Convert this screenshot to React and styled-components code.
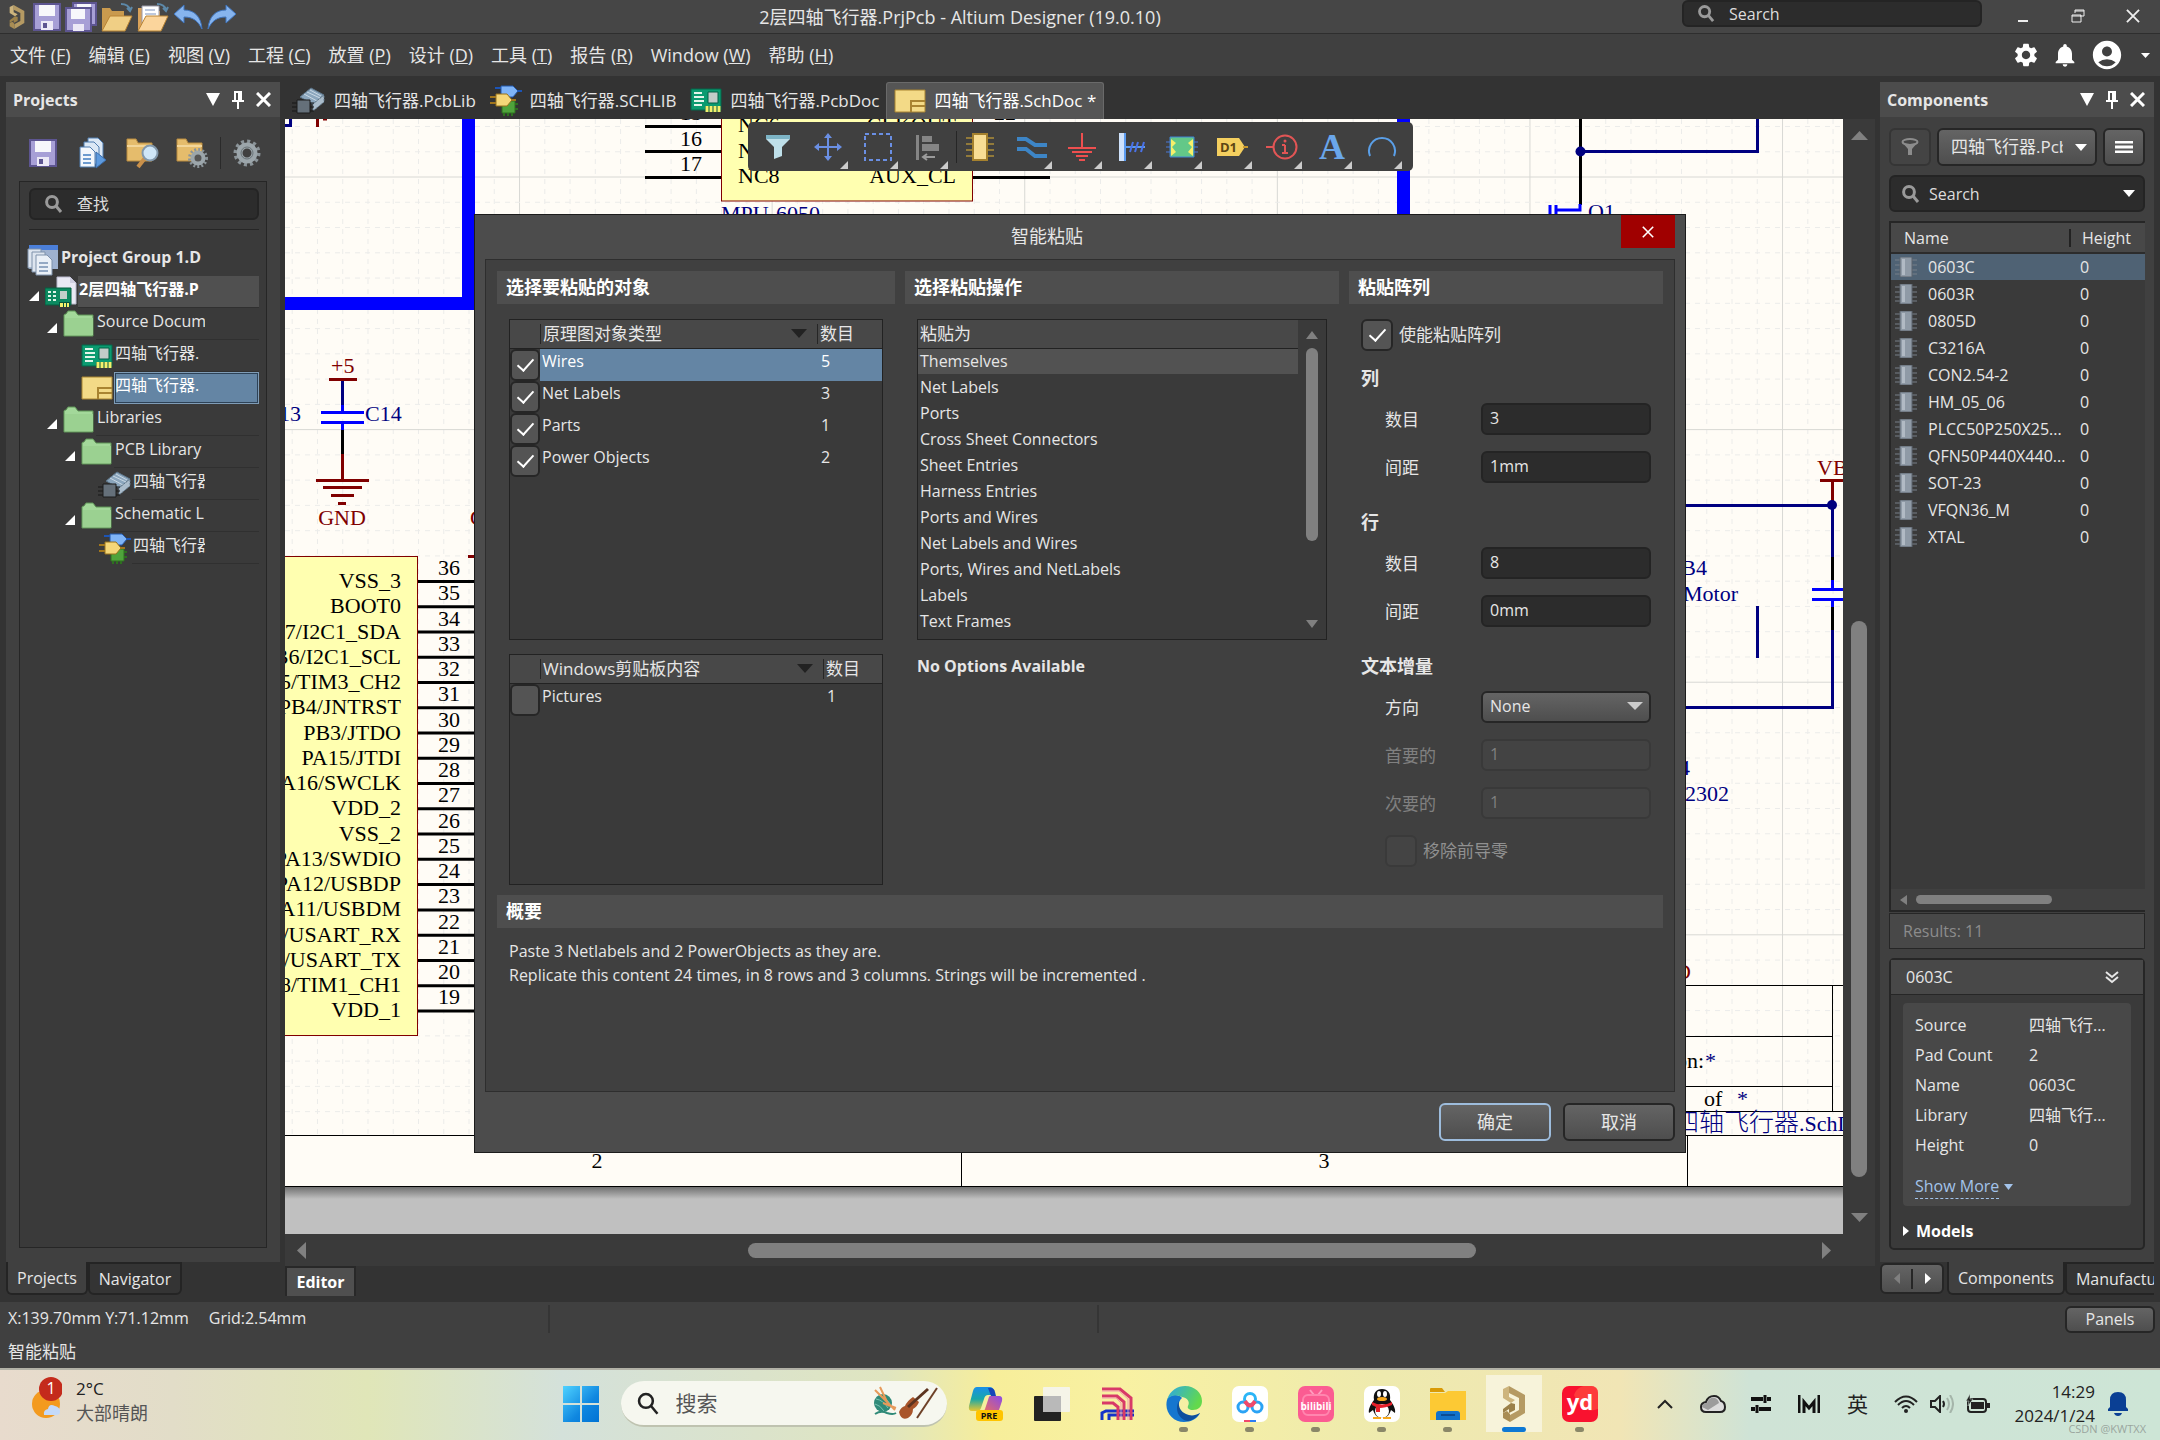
import React from 'react';
import styled, { createGlobalStyle, css } from 'styled-components';
import { MdSettings, MdNotifications, MdAccountCircle } from 'react-icons/md';

const projectTree = [
  { level: 0, icon: 'group', text: 'Project Group 1.D', bold: true, plain: true },
  { level: 1, icon: 'project', text: '2层四轴飞行器.P', bold: true, open: true, active: true },
  { level: 2, icon: 'folder', text: 'Source Docum', open: true },
  { level: 3, icon: 'pcb', text: '四轴飞行器.' },
  { level: 3, icon: 'sch', text: '四轴飞行器.', selected: true },
  { level: 2, icon: 'folder', text: 'Libraries', open: true },
  { level: 3, icon: 'folder', text: 'PCB Library', open: true },
  { level: 4, icon: 'pcblib', text: '四轴飞行器' },
  { level: 3, icon: 'folder', text: 'Schematic L', open: true },
  { level: 4, icon: 'schlib', text: '四轴飞行器' },
];

const menus = [
  ['文件', 'F'],
  ['编辑', 'E'],
  ['视图', 'V'],
  ['工程', 'C'],
  ['放置', 'P'],
  ['设计', 'D'],
  ['工具', 'T'],
  ['报告', 'R'],
  ['Window', 'W'],
  ['帮助', 'H'],
];

const docTabs = [
  { icon: 'pcblib', text: '四轴飞行器.PcbLib' },
  { icon: 'schlib', text: '四轴飞行器.SCHLIB' },
  { icon: 'pcb', text: '四轴飞行器.PcbDoc' },
  { icon: 'sch', text: '四轴飞行器.SchDoc *', active: true },
];

const pasteTypes = [
  'Themselves',
  'Net Labels',
  'Ports',
  'Cross Sheet Connectors',
  'Sheet Entries',
  'Harness Entries',
  'Ports and Wires',
  'Net Labels and Wires',
  'Ports, Wires and NetLabels',
  'Labels',
  'Text Frames',
];

const parts = [
  '0603C',
  '0603R',
  '0805D',
  'C3216A',
  'CON2.54-2',
  'HM_05_06',
  'PLCC50P250X25...',
  'QFN50P440X440...',
  'SOT-23',
  'VFQN36_M',
  'XTAL',
];

const details = [
  ['Source', '四轴飞行...'],
  ['Pad Count', '2'],
  ['Name', '0603C'],
  ['Library', '四轴飞行...'],
  ['Height', '0'],
];

const mcuPins = [
  'VSS_3',
  'BOOT0',
  'PB7/I2C1_SDA',
  'PB6/I2C1_SCL',
  'PB5/TIM3_CH2',
  'PB4/JNTRST',
  'PB3/JTDO',
  'PA15/JTDI',
  'PA16/SWCLK',
  'VDD_2',
  'VSS_2',
  'PA13/SWDIO',
  'PA12/USBDP',
  'PA11/USBDM',
  'PA10/USART_RX',
  'PA9/USART_TX',
  'PA8/TIM1_CH1',
  'VDD_1',
];

/* ---------- icons ---------- */

function SaveIcon() {
  return (
    <svg width="28" height="28" viewBox="0 0 28 28">
      <path d="M1 1h26v26H1z" fill="#a79fd6" stroke="#5d5591" strokeWidth="2" />
      <path d="M6 2h16v11H6z" fill="#f7f7fb" />
      <path d="M8 18h12v9H8z" fill="#ece9f6" />
      <path d="M10 20h4v5h-4z" fill="#5d5591" />
    </svg>
  );
}

function SaveAllIcon() {
  return (
    <svg width="32" height="30" viewBox="0 0 32 30">
      <path d="M8 1h23v22H8z" fill="#a79fd6" stroke="#5d5591" strokeWidth="2" />
      <path d="M12 2h14v6H12z" fill="#f7f7fb" />
      <path d="M1 6h25v23H1z" fill="#a79fd6" stroke="#5d5591" strokeWidth="2" />
      <path d="M6 7h14v10H6z" fill="#f7f7fb" />
      <path d="M8 22h11v7H8z" fill="#ece9f6" />
    </svg>
  );
}

function OpenFolderIcon({ doc }) {
  return (
    <svg width="32" height="30" viewBox="0 0 32 30">
      <path d="M1 28V6h8l2 3h12v6" fill={doc ? '#d9a25a' : '#c99a4e'} />
      {doc && <path d="M5 4h17v20H5z" fill="#fff" stroke="#9a9aa8" />}
      {doc && <path d="M8 8h10M8 12h11M8 16h11" stroke="#7c93bd" />}
      <path d="M1 29 9 14h22l-7 15z" fill={doc ? '#fbd59c' : '#f0cf85'} stroke="#b98434" />
      <path d="M20 2c5 0 8 2 9 6m-3-2 3 3 2-4" fill="none" stroke="#5c88a8" strokeWidth="2" />
    </svg>
  );
}

function UndoIcon({ flip }) {
  return (
    <svg width="30" height="26" viewBox="0 0 30 26">
      <path
        d="M1 10 11 1v5c10 0 17 6 18 19-4-8-9-12-18-12v6z"
        fill="#86b4ee"
        stroke="#3f74bd"
        transform={flip ? 'translate(30 0) scale(-1 1)' : undefined}
      />
    </svg>
  );
}

function LogoIcon({ size = 24 }) {
  return (
    <svg width={size} height={size} viewBox="-7 0 36 36">
      <path d="M6 0 22 9v18L7 36v-7l9-5V12L6 7z" fill="#b59a63" />
      <path d="M6 0 0 3v9l8 5 4-3-6-3V7z" fill="#cdb47d" />
      <path d="m0 23 8-6 4 1v6l-6 3v-4l-6 4z" fill="#9b8049" />
      <path d="M0 27v5l7 4v-8l-3-3z" fill="#a98d54" />
    </svg>
  );
}

function SearchGlyph({ color = '#9a9a9a', size = 18, weight = 3 }) {
  return (
    <svg width={size} height={size} viewBox="0 0 18 18">
      <circle cx="7" cy="7" r="5.4" fill="none" stroke={color} strokeWidth={weight} />
      <path d="m11 11 5 6" stroke={color} strokeWidth={weight} />
    </svg>
  );
}

function Triangle({ dir = 'down', w = 16, h = 12, color = '#fff' }) {
  const shapes = {
    down: 'M0 0h10L5 10z',
    up: 'M5 0l5 10H0z',
    left: 'M10 0v10L0 5z',
    right: 'M0 0l10 5-10 5z',
    corner: 'M10 0v10H0z',
  };
  return (
    <svg width={w} height={h} viewBox="0 0 10 10" preserveAspectRatio="none">
      <path d={shapes[dir]} fill={color} />
    </svg>
  );
}

function PinIcon() {
  return (
    <svg width="12" height="18" viewBox="0 0 12 18">
      <path d="M2 0h8v9h2v2H7v7H5v-7H0V9h2zm2 2v7h2V2z" fill="#fff" fillRule="evenodd" />
    </svg>
  );
}

function CrossIcon({ size = 15, weight = 3, color = '#fff' }) {
  return (
    <svg width={size} height={size} viewBox="0 0 15 15">
      <path d="m1 1 13 13M14 1 1 14" stroke={color} strokeWidth={weight} />
    </svg>
  );
}

function FileIcon({ type }) {
  switch (type) {
    case 'group':
      return (
        <svg width="32" height="32" viewBox="0 0 32 32">
          <path d="M2 1h29v24H2z" fill="#9fb2cf" />
          <path d="M2 1h29v5H2z" fill="#4b7fd9" />
          <path d="M1 5h13v19H1z" fill="#dde5ef" stroke="#7f92ab" />
          <path d="M5 8h13v20H5z" fill="#dde5ef" stroke="#7f92ab" />
          <path d="M9 11h11l5 5v15H9z" fill="#eaf0f7" stroke="#7f92ab" />
          <path d="M12 19h9M12 23h9M12 27h9" stroke="#94a9c4" strokeWidth="2" />
        </svg>
      );
    case 'project':
      return (
        <svg width="32" height="32" viewBox="0 0 32 32">
          <path d="M12 1h13l6 6v21H12z" fill="#e9e9f4" stroke="#b9b9cd" />
          <path d="M25 1v6h6" fill="#cfcfe0" />
          <path d="M0 12h26v17H0z" fill="#0c8a60" stroke="#045c3e" />
          <path d="M3 16h3M8 16h3M3 20h3M8 20h3M3 24h3M8 24h3" stroke="#dff5e8" strokeWidth="2" />
          <path d="M15 15h7v8h-7z" fill="#c3cfca" />
          <path d="M14 26h11v5H14z" fill="#07563f" />
          <path d="M15 29h3M19 29h2M22 29h2" stroke="#f4f06d" strokeWidth="4" />
        </svg>
      );
    case 'folder':
      return (
        <svg width="32" height="28" viewBox="0 0 32 28">
          <path d="M1 26V5q0-1 2-1l2-3h7l3 4h15v21z" fill="#a3d89a" stroke="#5e9457" />
          <path d="M2 8h28v17H2z" fill="#9bd191" />
        </svg>
      );
    case 'pcb':
      return (
        <svg width="32" height="25" viewBox="0 0 32 25">
          <path d="M1 1h30v21H1z" fill="#0b9b70" stroke="#05664a" />
          <path d="M4 5h8M4 9h10M4 13h10M4 17h8" stroke="#e2f5ea" strokeWidth="2" />
          <path d="M18 4h10v11H18z" fill="#c2ccc8" stroke="#056146" />
          <path d="M15 18h16v6H15z" fill="#07563f" />
          <path d="M17 18v6M21 18v6M25 18v6M29 18v6" stroke="#f4f06d" strokeWidth="3" />
        </svg>
      );
    case 'sch':
      return (
        <svg width="32" height="24" viewBox="0 0 32 24">
          <path d="M1 1h30v22H1z" fill="#f3da87" stroke="#a98431" />
          <path d="M17 23V12h14M17 17h14" fill="none" stroke="#a98431" strokeWidth="2" />
        </svg>
      );
    case 'pcblib':
      return (
        <svg width="34" height="27" viewBox="0 0 34 27">
          <path d="m8 10 11-9 13 7-11 9z" fill="#8ba6bd" stroke="#5c7488" />
          <path d="m12 7 13 7M15 5l13 6M18 3l11 6" stroke="#c9d8e4" />
          <path d="m21 17 11-9v7l-11 9z" fill="#aabccb" stroke="#62798b" strokeDasharray="2 1" />
          <path d="M0 16h22M0 20h22M0 24h22" stroke="#161616" strokeWidth="1" />
          <path d="M5 13h13v13H5z" fill="#65707a" stroke="#1c1c1c" />
        </svg>
      );
    default:
      return (
        <svg width="32" height="31" viewBox="0 0 32 31">
          <path d="M5 3h6M24 6h8" stroke="#1c54b5" strokeWidth="2" />
          <path d="M11 1h12l5 5-5 6H11z" fill="#7fb4f7" stroke="#2358ad" />
          <path d="M12 16h13v12H12z" fill="#4fa33b" stroke="#2e7020" />
          <path d="M14 28v3M18 28v3M22 28v3M25 19h3M25 24h3" stroke="#2e7020" strokeWidth="2" />
          <path d="M0 12h6M0 18h6M20 15h6" stroke="#a2761b" strokeWidth="2" />
          <path d="M6 9h11l5 6-5 6H6z" fill="#f5d779" stroke="#99721c" />
        </svg>
      );
  }
}

function GearIcon({ size = 28 }) {
  return (
    <svg width={size} height={size} viewBox="0 0 28 28">
      <circle cx="14" cy="14" r="11.5" fill="none" stroke="#8b9499" strokeWidth="4" strokeDasharray="3 3" />
      <circle cx="14" cy="14" r="7.5" fill="none" stroke="#9ca6ab" strokeWidth="6" />
      <circle cx="14" cy="14" r="6" fill="none" stroke="#6a7478" strokeWidth="1" />
    </svg>
  );
}

function CopyDocsIcon() {
  return (
    <svg width="28" height="32" viewBox="0 0 28 32">
      <path d="M9 1h10l5 5v18H9z" fill="#dce8f5" stroke="#4f7cb0" />
      <path d="M5 5h10l5 5v17H5z" fill="#dce8f5" stroke="#4f7cb0" />
      <path d="M1 10h10l5 5v15H1z" fill="#f3f7fc" stroke="#4f7cb0" />
      <path d="M4 18h8M4 22h8M4 26h8" stroke="#6d9bcf" strokeWidth="2" />
      <path d="m17 15 10 8-10 8z" fill="#5d9ade" stroke="#3a6dab" />
    </svg>
  );
}

function FolderToolIcon({ gear }) {
  return (
    <svg width="34" height="32" viewBox="0 0 34 32">
      <path d="M1 24V2h9l2 4h14v18z" fill="#e5bc6c" stroke="#b98b3f" />
      <path d="M1 9h25" stroke="#f3d69a" strokeWidth="2" />
      {gear ? (
        <g>
          <circle cx="22" cy="21" r="8.5" fill="none" stroke="#8b9499" strokeWidth="3" strokeDasharray="2 2" />
          <circle cx="22" cy="21" r="5.5" fill="#555" stroke="#9ca6ab" strokeWidth="4" />
        </g>
      ) : (
        <g>
          <path d="m19 21-7 9" stroke="#c9904a" strokeWidth="4" />
          <circle cx="24" cy="16" r="7.5" fill="#cfe6f7" stroke="#8298ab" strokeWidth="2" />
        </g>
      )}
    </svg>
  );
}

const toolIcons = [
  <svg key="filter" width="28" height="28" viewBox="0 0 28 28">
    <path d="M2 2h24v4l-8 8v9l-8 3V14L2 6z" fill="#bfe0ea" />
    <path d="M2 2h24v4H2z" fill="#7db4c6" />
  </svg>,
  <svg key="move" width="28" height="28" viewBox="0 0 28 28">
    <path d="M14 2v24M2 14h24" stroke="#6a8fe4" strokeWidth="2" />
    <path d="m14 0 4 5h-8zM14 28l4-5h-8zM0 14l5-4v8zM28 14l-5-4v8z" fill="#6a8fe4" />
  </svg>,
  <svg key="select" width="30" height="30" viewBox="0 0 30 30">
    <path d="M2 2h26v26H2z" fill="none" stroke="#6a8fe4" strokeWidth="2" strokeDasharray="4 3" />
  </svg>,
  <svg key="align" width="28" height="28" viewBox="0 0 28 28">
    <path d="M2 2h3v25H2zM8 3h10v6H8zM8 11h17v7H8z" fill="#858585" />
    <path d="M9 24h12m-8-3-4 3 4 3" fill="none" stroke="#9a9a9a" strokeWidth="2" />
  </svg>,
  <svg key="part" width="28" height="30" viewBox="0 0 28 30">
    <path d="M0 6h28M0 12h28M0 18h28M0 24h28" stroke="#927a3a" strokeWidth="2" />
    <path d="M7 2h14v26H7z" fill="#f8dd94" stroke="#a5812e" strokeWidth="2" />
  </svg>,
  <svg key="bus" width="32" height="24" viewBox="0 0 32 24">
    <path d="M1 4h9l9 6h12M1 14h9l9 7h12" fill="none" stroke="#3d85c6" strokeWidth="4" />
  </svg>,
  <svg key="gnd" width="30" height="30" viewBox="0 0 30 30">
    <path d="M15 1v14M1 16h28M5 20h20M9 24h12M12 28h6" stroke="#ee4f4f" strokeWidth="2" />
  </svg>,
  <svg key="harness" width="28" height="30" viewBox="0 0 28 30">
    <path d="M1 1h6v28H1z" fill="#cfe2fb" />
    <path d="M7 1v28M7 15h20" stroke="#5b9bf0" strokeWidth="2" />
    <path d="m15 10-3 10M20 10l-3 10M26 10l-3 10" stroke="#4a72e8" strokeWidth="2" />
  </svg>,
  <svg key="sheet" width="32" height="24" viewBox="0 0 32 24">
    <path d="M0 7h32M0 12h32M0 17h32" stroke="#4b79d8" />
    <path d="M4 2h24v20H4z" fill="#63c888" stroke="#4183d6" />
    <path d="M5 4 10 8l-4 4 4 5-5 4zM27 4 22 8l4 4-4 5 5 4z" fill="#f7f06a" />
  </svg>,
  <svg key="port" width="32" height="20" viewBox="0 0 32 20">
    <path d="M1 1h22l6 9-6 9H1z" fill="#f4cf5f" />
    <path d="M27 10h5" stroke="#c99a2e" strokeWidth="2" />
    <text x="4" y="15" fontFamily="Open Sans" fontWeight="700" fontSize="13" fill="#5d4614">
      D1
    </text>
  </svg>,
  <svg key="info" width="32" height="28" viewBox="0 0 32 28">
    <circle cx="19" cy="14" r="11.5" fill="none" stroke="#e25555" strokeWidth="2" />
    <path d="M0 14h8M19 12v8M16 12h3M16 20h6" stroke="#e25555" strokeWidth="2" />
    <circle cx="19" cy="8" r="1.5" fill="#e25555" />
  </svg>,
  <svg key="text" width="28" height="32" viewBox="0 0 28 32">
    <text x="14" y="28" textAnchor="middle" fontFamily="Liberation Serif" fontWeight="700" fontSize="36" fill="#6aa6ea">
      A
    </text>
  </svg>,
  <svg key="arc" width="30" height="28" viewBox="0 0 30 28">
    <path d="M3 23a13 13 0 1 1 24 0" fill="none" stroke="#5a9fe8" strokeWidth="2" />
  </svg>,
];

/* ---------- schematic sheet ---------- */

const GRID = 25.26;

function Schematic() {
  const vertical = Array.from({ length: 62 }, (_, i) => 292.2 + i * GRID);
  const horizontal = Array.from({ length: 40 }, (_, i) => 126.5 + i * GRID);
  return (
    <Sheet viewBox="285 119 1558 1115" preserveAspectRatio="xMinYMin slice">
      <defs>
        <linearGradient id="sheetShadow" x1="0" y1="0" x2="0" y2="1">
          <stop offset="0" stopColor="#707070" />
          <stop offset="1" stopColor="#c0c0c0" />
        </linearGradient>
      </defs>
      <rect x="285" y="119" width="1558" height="1068" fill="#fffcf6" />
      {vertical.map((x, i) => (
        <path
          key={x}
          d={`M${x} 119V1135`}
          stroke={i % 10 === 9 ? '#d8d8d4' : '#ececea'}
          strokeDasharray={i % 10 === 9 ? undefined : '5 5'}
          strokeWidth="1"
        />
      ))}
      {horizontal.map((y, i) => (
        <path
          key={y}
          d={`M285 ${y}H1843`}
          stroke={i % 10 === 2 ? '#d8d8d4' : '#ececea'}
          strokeDasharray={i % 10 === 2 ? undefined : '5 5'}
          strokeWidth="1"
        />
      ))}

      {/* frame and sheet edge */}
      <path d="M285 1135.5H1843M285 1186.5H1843M961.5 1135V1186M1687.5 1135V1186" stroke="#000" />
      <text x="597" y="1168" textAnchor="middle">2</text>
      <text x="1324" y="1168" textAnchor="middle">3</text>
      <rect x="285" y="1187" width="1558" height="47" fill="#c0c0c0" />
      <rect x="285" y="1187" width="1558" height="12" fill="url(#sheetShadow)" />

      {/* selection frame */}
      <path d="M468.5 119V303.5H285M1403.5 119V240" fill="none" stroke="#0000ff" strokeWidth="13" />
      <path d="M290.5 119V125.5H285" fill="none" stroke="#000080" strokeWidth="3" />
      <path d="M317.5 119V127M323 119h4" stroke="#800000" strokeWidth="3" />

      {/* MPU-6050 */}
      <rect x="721.5" y="100" width="251" height="101" fill="#ffffb0" stroke="#800000" />
      <path d="M645 126.5H721M645 151.5H721M645 177.5H721M973 177.5H1050" stroke="#000" strokeWidth="3" />
      <text x="680" y="120">15</text>
      <text x="680" y="146">16</text>
      <text x="680" y="171">17</text>
      <text x="738" y="132">NC6</text>
      <text x="738" y="158">NC7</text>
      <text x="738" y="183">NC8</text>
      <text x="956" y="132" textAnchor="end">CLKOUT</text>
      <text x="956" y="183" textAnchor="end">AUX_CL</text>
      <text x="994" y="120">22</text>
      <text x="721" y="221" fill="#000080">MPU-6050</text>

      {/* MCU */}
      <rect x="200" y="556.5" width="217.5" height="479" fill="#ffffb0" stroke="#800000" />
      {mcuPins.map((name, i) => (
        <g key={name}>
          <text x="401" y={588 + i * GRID} textAnchor="end">{name}</text>
          <text x="438" y={575 + i * GRID}>{36 - i}</text>
          <path d={`M418 ${581.5 + i * GRID}h60`} stroke="#000" strokeWidth="3" />
        </g>
      ))}

      {/* C14 */}
      <g strokeWidth="3" fill="none">
        <path d="M342.5 379V405" stroke="#000080" />
        <path d="M342.5 405V412M321 412.5H364M321 422.5H364M342.5 422V430" stroke="#0000ff" />
        <path d="M342.5 430V454" stroke="#000" />
        <path
          d="M329 379.5H357M342.5 454V480M316 480.5H369M323 487.5H362M331 495.5H354M338 503.5H346M468 556.5h10"
          stroke="#800000"
        />
      </g>
      <text x="331" y="373" fill="#800000">+5</text>
      <text x="342" y="525" textAnchor="middle" fill="#800000">GND</text>
      <text x="470" y="525" fill="#800000">GND</text>
      <text x="365" y="421" fill="#000080">C14</text>
      <text x="301" y="421" textAnchor="end" fill="#000080">C13</text>

      {/* motor driver */}
      <g strokeWidth="3" fill="none">
        <path d="M1757.5 119V151.5H1580" stroke="#000080" />
        <path d="M1580.5 119V205" stroke="#000" />
        <path d="M1550 205V215M1556 205V215M1556 210H1580V204" stroke="#0000ff" />
        <path d="M1686 505.5H1832.5V557M1832.5 630V707.5H1686M1757.5 606V658" stroke="#000080" />
        <path d="M1832.5 557V580M1832.5 607V630" stroke="#000" />
        <path d="M1832.5 580V589M1812 589.5H1852M1812 599.5H1852M1832.5 599V607" stroke="#0000ff" />
        <path d="M1820 480.5H1852M1832.5 480V505" stroke="#800000" />
      </g>
      <circle cx="1580.5" cy="151.5" r="5" fill="#000080" />
      <circle cx="1832" cy="505" r="5" fill="#000080" />
      <text x="1588" y="219" fill="#000080">Q1</text>
      <text x="1817" y="475" fill="#800000">VBAT</text>
      <text x="1707" y="575" textAnchor="end" fill="#000080">B4</text>
      <text x="1738" y="601" textAnchor="end" fill="#000080">Motor</text>
      <text x="1690" y="775" textAnchor="end" fill="#000080">Q4</text>
      <text x="1729" y="801" textAnchor="end" fill="#000080">SI2302</text>

      {/* title block */}
      <text x="1691" y="979" textAnchor="end" fill="#800000">GND</text>
      <path
        d="M1600 985.5H1843M1832.5 985V1111M1600 1036.5H1832M1600 1086.5H1832M1600 1111.5H1843"
        stroke="#000"
        fill="none"
      />
      <text x="1704" y="1068" textAnchor="end">Revision:</text>
      <text x="1705" y="1068" fill="#000080">*</text>
      <text x="1704" y="1106">of</text>
      <text x="1737" y="1106" fill="#000080">*</text>
      <text x="1674" y="1131" fill="#000080">
        <tspan fontFamily="Noto Sans CJK SC" fontSize="25" fontWeight="300">四轴飞行器</tspan>.SchDoc
      </text>
    </Sheet>
  );
}

/* ---------- panels ---------- */

function PanelTitle({ children }) {
  return (
    <PanelHeader>
      <strong>{children}</strong>
      <IconButton aria-label="menu"><Triangle w={14} h={13} /></IconButton>
      <IconButton aria-label="pin"><PinIcon /></IconButton>
      <IconButton aria-label="close"><CrossIcon /></IconButton>
    </PanelHeader>
  );
}

function ProjectsPanel() {
  return (
    <SideColumn>
      <Panel>
        <PanelTitle>Projects</PanelTitle>
        <ProjectTools>
          <ToolSlot aria-label="save"><SaveIcon /></ToolSlot>
          <ToolSlot aria-label="compile"><CopyDocsIcon /></ToolSlot>
          <ToolSlot aria-label="explore"><FolderToolIcon /></ToolSlot>
          <ToolSlot aria-label="options"><FolderToolIcon gear /></ToolSlot>
          <ToolSlot aria-label="settings" $divided><GearIcon /></ToolSlot>
        </ProjectTools>
        <TreeBox>
          <SearchField $height={32}>
            <SearchGlyph />
            <input aria-label="查找" placeholder="查找" />
          </SearchField>
          <TreeRule />
          <Tree>
            {projectTree.map((node, i) => (
              <TreeRow key={i} $level={node.level}>
                <TreeArrow>{node.open && <Triangle dir="corner" w={10} h={10} />}</TreeArrow>
                <TreeIcon><FileIcon type={node.icon} /></TreeIcon>
                <TreeLabel $active={node.active} $selected={node.selected} $bold={node.bold} $plain={node.plain}>
                  <span>{node.text}</span>
                </TreeLabel>
              </TreeRow>
            ))}
          </Tree>
        </TreeBox>
      </Panel>
      <BottomTabs>
        <BottomTab $active>Projects</BottomTab>
        <BottomTab>Navigator</BottomTab>
      </BottomTabs>
    </SideColumn>
  );
}

function PartIcon() {
  return (
    <svg width="22" height="20" viewBox="0 0 22 20">
      <path d="M0 3h22M0 8h22M0 13h22M0 17h22" stroke="#777f88" />
      <path d="M5 0h12v20H5z" fill="#8f9aa6" stroke="#5b636c" />
      <path d="M7 2h3v16H7z" fill="#b1bac4" />
    </svg>
  );
}

function ComponentsPanel() {
  return (
    <SideColumn>
      <Panel>
        <PanelTitle>Components</PanelTitle>
        <PartFilters>
          <FilterButton $dim aria-label="filter">
            <svg width="18" height="18" viewBox="0 0 18 18">
              <path d="M1 4q8 4 16 0l-6 7v6H7v-6z" fill="#8c8c8c" />
              <ellipse cx="9" cy="4" rx="7.5" ry="3" fill="none" stroke="#8c8c8c" strokeWidth="2" />
            </svg>
          </FilterButton>
          <LibrarySelect>
            <select aria-label="library">
              <option>四轴飞行器.PcbLib</option>
            </select>
            <Triangle w={12} h={7} />
          </LibrarySelect>
          <FilterButton aria-label="operations">
            <svg width="18" height="12" viewBox="0 0 18 12">
              <path d="M0 1h18M0 6h18M0 11h18" stroke="#fff" strokeWidth="3" />
            </svg>
          </FilterButton>
        </PartFilters>
        <PartSearch>
          <SearchField $height={37} $tight>
            <SearchGlyph />
            <input aria-label="Search components" placeholder="Search" />
            <Triangle w={12} h={7} />
          </SearchField>
        </PartSearch>
        <PartBox>
          <PartTable>
            <thead>
              <tr>
                <th>Name</th>
                <th>Height</th>
              </tr>
            </thead>
            <tbody>
              {parts.map((name, i) => (
                <PartRow key={name} $selected={i === 0}>
                  <td>
                    <PartName><PartIcon />{name}</PartName>
                  </td>
                  <td>0</td>
                </PartRow>
              ))}
            </tbody>
          </PartTable>
          <PartScroll>
            <Triangle dir="left" w={7} h={10} color="#808080" />
            <i />
          </PartScroll>
        </PartBox>
        <Results>Results: 11</Results>
        <DetailCard>
          <DetailHead>
            0603C
            <svg width="14" height="13" viewBox="0 0 14 13">
              <path d="m1 1 6 5 6-5M1 6l6 5 6-5" fill="none" stroke="#e6e6e6" strokeWidth="2" />
            </svg>
          </DetailHead>
          <DetailBody>
            <dl>
              {details.map(([key, value]) => (
                <div key={key}>
                  <dt>{key}</dt>
                  <dd>{value}</dd>
                </div>
              ))}
            </dl>
            <ShowMore href="#more">
              <span>Show More</span>
              <Triangle w={9} h={6} color="#a3c3ea" />
            </ShowMore>
          </DetailBody>
          <Models>
            <Triangle dir="right" w={6} h={10} />
            Models
          </Models>
        </DetailCard>
      </Panel>
      <BottomTabs>
        <TabArrows>
          <button aria-label="previous tab"><Triangle dir="left" w={6} h={11} color="#808080" /></button>
          <button aria-label="next tab"><Triangle dir="right" w={6} h={11} /></button>
        </TabArrows>
        <BottomTab $active>Components</BottomTab>
        <BottomTab>Manufacturer</BottomTab>
      </BottomTabs>
    </SideColumn>
  );
}

/* ---------- smart paste dialog ---------- */

function CountTable({ title, rows, countWidth }) {
  return (
    <GridTable $count={countWidth}>
      <thead>
        <tr>
          <th aria-label="enabled" />
          <th>
            <HeadCell>
              {title}
              <Triangle w={16} h={9} color="#222" />
            </HeadCell>
          </th>
          <th>数目</th>
        </tr>
      </thead>
      <tbody>
        {rows.map(([name, count, checked, selected]) => (
          <GridRow key={name} $selected={selected}>
            <td>
              <Tick type="checkbox" defaultChecked={checked} aria-label={name} $small />
            </td>
            <td>{name}</td>
            <td>{count}</td>
          </GridRow>
        ))}
      </tbody>
    </GridTable>
  );
}

function NumberField({ id, label, value, disabled }) {
  return (
    <Field $disabled={disabled}>
      <label htmlFor={id}>{label}</label>
      <TextInput id={id} defaultValue={value} disabled={disabled} />
    </Field>
  );
}

function SmartPasteDialog() {
  return (
    <DialogLayer>
      <Dialog role="dialog" aria-labelledby="dialog-title">
        <DialogTitle>
          <h2 id="dialog-title">智能粘贴</h2>
          <CloseButton aria-label="close">
            <CrossIcon size={12} weight={2} />
          </CloseButton>
        </DialogTitle>
        <DialogBody>
          <Columns>
            <Section>
              <SectionTitle>选择要粘贴的对象</SectionTitle>
              <SectionContent>
                <GridFrame $height={321}>
                  <CountTable
                    title="原理图对象类型"
                    countWidth={65}
                    rows={[
                      ['Wires', 5, true, true],
                      ['Net Labels', 3, true],
                      ['Parts', 1, true],
                      ['Power Objects', 2, true],
                    ]}
                  />
                </GridFrame>
                <GridFrame $height={231}>
                  <CountTable title="Windows剪贴板内容" countWidth={59} rows={[['Pictures', 1, false]]} />
                </GridFrame>
              </SectionContent>
            </Section>
            <Section>
              <SectionTitle>选择粘贴操作</SectionTitle>
              <SectionContent>
                <GridFrame $height={321}>
                  <PasteTable>
                    <thead>
                      <tr>
                        <th>粘贴为</th>
                      </tr>
                    </thead>
                    <tbody>
                      {pasteTypes.map((name, i) => (
                        <PasteRow key={name} $selected={i === 0}>
                          <td>{name}</td>
                        </PasteRow>
                      ))}
                    </tbody>
                  </PasteTable>
                  <ListScroll>
                    <Triangle dir="up" w={12} h={8} color="#808080" />
                    <i />
                    <Triangle w={12} h={8} color="#808080" />
                  </ListScroll>
                </GridFrame>
                <strong>No Options Available</strong>
              </SectionContent>
            </Section>
            <Section>
              <SectionTitle>粘贴阵列</SectionTitle>
              <ArrayForm>
                <CheckLine>
                  <Tick type="checkbox" defaultChecked />
                  使能粘贴阵列
                </CheckLine>
                <fieldset>
                  <legend>列</legend>
                  <NumberField id="col-count" label="数目" value="3" />
                  <NumberField id="col-gap" label="间距" value="1mm" />
                </fieldset>
                <fieldset>
                  <legend>行</legend>
                  <NumberField id="row-count" label="数目" value="8" />
                  <NumberField id="row-gap" label="间距" value="0mm" />
                </fieldset>
                <fieldset>
                  <legend>文本增量</legend>
                  <Field>
                    <label htmlFor="direction">方向</label>
                    <DirectionSelect>
                      <select id="direction">
                        <option>None</option>
                      </select>
                      <Triangle w={16} h={8} color="#ccc" />
                    </DirectionSelect>
                  </Field>
                  <NumberField id="primary" label="首要的" value="1" disabled />
                  <NumberField id="secondary" label="次要的" value="1" disabled />
                  <CheckLine $disabled>
                    <Tick type="checkbox" disabled />
                    移除前导零
                  </CheckLine>
                </fieldset>
              </ArrayForm>
            </Section>
          </Columns>
          <SectionTitle>概要</SectionTitle>
          <Summary>
            Paste 3 Netlabels and 2 PowerObjects as they are.
            <br />
            Replicate this content 24 times, in 8 rows and 3 columns. Strings will be incremented .
          </Summary>
        </DialogBody>
        <DialogActions>
          <DialogButton $primary>确定</DialogButton>
          <DialogButton>取消</DialogButton>
        </DialogActions>
      </Dialog>
    </DialogLayer>
  );
}

/* ---------- windows taskbar ---------- */

const taskApps = [
  {
    name: 'Copilot',
    icon: (
      <svg width="36" height="36" viewBox="0 0 36 36">
        <defs>
          <linearGradient id="cpA" x1="0" y1="0" x2="0" y2="1">
            <stop offset="0" stopColor="#1a8fe8" />
            <stop offset=".5" stopColor="#19a8a8" />
            <stop offset="1" stopColor="#e9c62f" />
          </linearGradient>
          <linearGradient id="cpB" x1="1" y1="0" x2="0" y2="1">
            <stop offset="0" stopColor="#8a4be8" />
            <stop offset="1" stopColor="#f5714f" />
          </linearGradient>
        </defs>
        <path d="M9 1h13q3 0 4 4l1 4h-7q-3 0-4 4l-3 9q-1 3-4 3H4q-4 0-3-5L5 5q1-4 4-4z" fill="url(#cpA)" />
        <path d="M20 2h3q3 0 4 4l1 4h-5z" fill="#1546b8" />
        <path d="M22 10h9q4 0 3 5l-3 9q-1 3-5 3H12q4-1 5-4l3-9q1-4 2-4z" fill="url(#cpB)" />
        <rect x="8" y="24" width="27" height="11" rx="3" fill="#ffc400" />
        <text x="21" y="33" textAnchor="middle" fontFamily="Open Sans" fontWeight="700" fontSize="9" fill="#111">
          PRE
        </text>
      </svg>
    ),
  },
  {
    name: 'Task view',
    icon: (
      <svg width="36" height="36" viewBox="0 0 36 36">
        <rect x="0" y="10" width="27" height="25" rx="1" fill="#222" />
        <rect x="9" y="1" width="27" height="25" rx="1" fill="#f4f4f4" fillOpacity=".85" />
        <rect x="9" y="10" width="18" height="16" fill="#b9b9b9" />
      </svg>
    ),
  },
  {
    name: 'Wire tool',
    icon: (
      <svg width="36" height="36" viewBox="0 0 36 36" fill="none">
        <path d="M2 34v-7l4-2h28M9 34v-5h25" stroke="#1432c8" strokeWidth="3" />
        <path d="M2 3h18l11 9v22M2 10h15l7 6v18M2 17h11l5 4v13" stroke="#d83a68" strokeWidth="3" />
        <path d="M2 5h17l9 8v21M2 12h14l5 5v17" stroke="#f39ab0" strokeWidth="1" />
      </svg>
    ),
  },
  {
    name: 'Edge',
    running: true,
    icon: (
      <svg width="36" height="36" viewBox="0 0 36 36">
        <defs>
          <linearGradient id="edgeA" x1="0" y1="0" x2="1" y2=".4">
            <stop offset="0" stopColor="#2aa7e8" />
            <stop offset="1" stopColor="#63d94c" />
          </linearGradient>
        </defs>
        <path d="M1 14C3 9 12 7 16 12c-5 4-5 14 3 18 5 2 10 1 15-3-3 6-9 9-16 9C7 36-2 26 1 14z" fill="#1576cf" />
        <path d="M1 14C4 4 12 0 19 0c10 0 17 7 17 15 0 6-4 9-9 9-4 0-6-2-5-4 2-4 0-8-6-9C9 8 3 10 1 14z" fill="url(#edgeA)" />
        <path d="M13 15c-5 8 0 19 9 20 6-1 10-5 12-8-5 3-10 3-14 1-5-2-8-7-7-13z" fill="#0e4f9e" />
      </svg>
    ),
  },
  {
    name: 'Cloud drive',
    running: true,
    icon: (
      <svg width="36" height="36" viewBox="0 0 36 36">
        <rect width="36" height="36" rx="7" fill="#fff" />
        <circle cx="11" cy="21" r="5" fill="none" stroke="#2aa3f5" strokeWidth="3" />
        <circle cx="25" cy="21" r="5" fill="none" stroke="#2aa3f5" strokeWidth="3" />
        <circle cx="18" cy="13" r="5.5" fill="none" stroke="#2bb5f7" strokeWidth="3" />
        <path d="M13 15q5 9 10 0" fill="none" stroke="#f0496b" strokeWidth="4" />
        <path d="M12 34h6v2h-6z" fill="#f0496b" />
        <path d="M18 34h6v2h-6z" fill="#2a7df5" />
      </svg>
    ),
  },
  {
    name: 'bilibili',
    running: true,
    icon: (
      <svg width="36" height="36" viewBox="0 0 36 36">
        <rect width="36" height="36" rx="7" fill="#fb5c92" />
        <path d="m12 4 4 5M24 4l-4 5" stroke="#ff9dbf" strokeWidth="2" />
        <rect x="5" y="9" width="26" height="20" rx="5" fill="none" stroke="#ff86af" strokeWidth="2" />
        <text x="18" y="24" textAnchor="middle" fontFamily="Open Sans" fontWeight="700" fontSize="10" fill="#fff">
          bilibili
        </text>
      </svg>
    ),
  },
  {
    name: 'QQ',
    running: true,
    icon: (
      <svg width="36" height="36" viewBox="0 0 36 36">
        <rect width="36" height="36" rx="7" fill="#fff" />
        <path d="M18 3c-6 0-9 4-8 11-3 4-6 9-5 13l4-3c2 6 5 8 9 8s7-2 9-8l4 3c1-4-2-9-5-13 1-7-2-11-8-11z" fill="#111" />
        <ellipse cx="18" cy="25" rx="7" ry="7" fill="#fff" />
        <ellipse cx="15" cy="8" rx="2" ry="3" fill="#fff" />
        <ellipse cx="21" cy="8" rx="2" ry="3" fill="#fff" />
        <ellipse cx="18" cy="13" rx="5" ry="2" fill="#f6a81c" />
        <path d="M8 16q10 5 20 0v3q-7 3-12 3v4h-4v-5l-4-2z" fill="#e5202a" />
        <path d="M9 32h8M19 32h8" stroke="#f6a81c" strokeWidth="2" />
      </svg>
    ),
  },
  {
    name: 'Explorer',
    running: true,
    icon: (
      <svg width="36" height="36" viewBox="0 0 36 36">
        <path d="M0 3q0-1 1-1h11l3 4H0z" fill="#d99a06" />
        <path d="M0 7h15l3-2h18v29H0z" fill="#fcc934" />
        <path d="M6 34v-6q0-3 3-3h18q3 0 3 3v6z" fill="#1272cc" />
        <path d="M11 29h14" stroke="#0c4c94" strokeWidth="2" />
      </svg>
    ),
  },
  { name: 'Altium Designer', active: true, icon: <LogoIcon size={36} /> },
  {
    name: 'Dictionary',
    running: true,
    icon: (
      <svg width="36" height="36" viewBox="0 0 36 36">
        <rect width="36" height="36" rx="7" fill="#f9122f" />
        <path d="M12 9a14 14 0 0 1 17-9q7 0 7 7v16q-16 6-24-14z" fill="#ff4b3f" fillOpacity=".7" />
        <text x="18" y="24" textAnchor="middle" fontFamily="Open Sans" fontWeight="700" fontSize="22" fill="#fff">
          yd
        </text>
      </svg>
    ),
  },
];

function Taskbar() {
  return (
    <TaskbarRoot>
      <Weather>
        <svg width="30" height="44" viewBox="0 0 30 44">
          <circle cx="14" cy="27" r="14" fill="#f39a1f" />
          <path d="M12 38q-1-5 4-6 1-6 7-3 5 1 5 6 0 3-4 3z" fill="#c4dafa" />
          <circle cx="19" cy="12" r="12" fill="#c42b1c" />
          <text x="19" y="17" textAnchor="middle" fontFamily="Open Sans" fontSize="16" fill="#fff">1</text>
        </svg>
        <div>
          <p>2°C</p>
          <small>大部晴朗</small>
        </div>
      </Weather>
      <TaskCenter>
        <TaskButton aria-label="Start">
          <svg width="36" height="36" viewBox="0 0 36 36">
            <defs>
              <linearGradient id="winStart" x1="0" y1="0" x2="1" y2="1">
                <stop offset="0" stopColor="#4fd2ff" />
                <stop offset=".6" stopColor="#0f87e0" />
                <stop offset="1" stopColor="#0072d4" />
              </linearGradient>
            </defs>
            <path d="M0 0h17v17H0zM19 0h17v17H19zM0 19h17v17H0zM19 19h17v17H19z" fill="url(#winStart)" />
          </svg>
        </TaskButton>
        <TaskSearch>
          <SearchGlyph color="#222" size={23} weight={2} />
          <input aria-label="搜索" placeholder="搜索" />
          <svg width="66" height="34" viewBox="0 0 66 34">
            <circle cx="10" cy="17" r="9" fill="#2f8a78" />
            <path d="M3 13q7 1 12 9M5 9q8 2 12 9M2 18q5 1 9 7" fill="none" stroke="#7cc4b2" />
            <path d="M2 4l20 20M7 1l9 19M10 17l13 5" stroke="#e79a5a" strokeWidth="2" />
            <path d="M2 28q6-4 12-1 6 2 9 0" fill="none" stroke="#2f8a78" strokeWidth="2" />
            <path d="M26 26q2-5 6-6 2-5 8-9l6 5q-2 5-6 7 0 6-5 9-7 3-9-6z" fill="#a9552a" />
            <path d="m35 21 20-18" stroke="#5c3420" strokeWidth="3" />
            <path d="M64 2 44 32" stroke="#6d4027" strokeWidth="2" />
          </svg>
        </TaskSearch>
        {taskApps.map((app) => (
          <TaskButton key={app.name} aria-label={app.name} $running={app.running} $active={app.active}>
            {app.icon}
          </TaskButton>
        ))}
      </TaskCenter>
      <Tray>
        <TrayGroup>
          <TrayItem aria-label="hidden icons">
            <svg width="16" height="10" viewBox="0 0 16 10">
              <path d="m1 9 7-7 7 7" fill="none" stroke="#222" strokeWidth="2" />
            </svg>
          </TrayItem>
          <TrayItem aria-label="OneDrive">
            <svg width="26" height="18" viewBox="0 0 26 18">
              <path d="M6 17q-5 0-5-5 0-4 5-5 2-6 8-6 5 0 7 5 4 1 4 6 0 5-5 5z" fill="#dcdcdc" stroke="#222" strokeWidth="2" />
              <path d="M2 12q0-4 5-4 2-6 8-5 3 1 4 5L8 15z" fill="#9c9c9c" />
            </svg>
          </TrayItem>
          <TrayItem aria-label="sliders">
            <svg width="20" height="18" viewBox="0 0 20 18">
              <path d="M0 4h12M16 4h4M0 14h4M8 14h12" stroke="#111" strokeWidth="4" />
              <path d="M14 0v8M6 10v8" stroke="#111" strokeWidth="3" />
            </svg>
          </TrayItem>
          <TrayItem aria-label="monitor">
            <svg width="22" height="18" viewBox="0 0 22 18">
              <path d="M1 0v18M21 0v18" stroke="#111" strokeWidth="3" />
              <path d="M6 18V7l5 6 5-6v11" fill="none" stroke="#111" strokeWidth="3" />
            </svg>
          </TrayItem>
          <TrayItem>英</TrayItem>
        </TrayGroup>
        <TrayItem $narrow aria-label="wifi">
          <svg width="24" height="18" viewBox="0 0 24 18">
            <path d="M1 7q11-11 22 0M4 10q8-8 16 0M8 13q4-4 8 0" fill="none" stroke="#222" strokeWidth="2" />
            <circle cx="12" cy="16" r="2" fill="#222" />
          </svg>
        </TrayItem>
        <TrayItem $narrow aria-label="volume">
          <svg width="24" height="18" viewBox="0 0 24 18">
            <path d="M1 6h4l5-5v16l-5-5H1z" fill="none" stroke="#222" strokeWidth="2" />
            <path d="M13 6q2 3 0 6" fill="none" stroke="#222" strokeWidth="2" />
            <path d="M17 3q4 6 0 12M20 0q6 9 0 18" fill="none" stroke="#a5b5aa" strokeWidth="2" />
          </svg>
        </TrayItem>
        <TrayItem $narrow aria-label="battery">
          <svg width="24" height="20" viewBox="0 0 24 20">
            <rect x="2" y="5" width="18" height="13" rx="3" fill="none" stroke="#222" strokeWidth="2" />
            <path d="M5 8h13v7H5zM21 9h3v5h-3z" fill="#222" />
            <path d="M4 0 0 7h3l-1 5 5-7H4z" fill="#222" stroke="#cfe3d6" strokeWidth=".5" />
          </svg>
        </TrayItem>
        <Clock>
          <time>14:29</time>
          <time>2024/1/24</time>
        </Clock>
        <svg width="20" height="24" viewBox="0 0 20 24">
          <path d="M0 19v-2l2-2V8q0-8 8-8t8 8v7l2 2v2zM6 21h8q-1 3-4 3t-4-3z" fill="#0a3f94" />
        </svg>
      </Tray>
      <Watermark>CSDN @KWTXX</Watermark>
    </TaskbarRoot>
  );
}

/* ---------- page ---------- */

function App() {
  return (
    <Page>
      <GlobalStyle />
      <TitleBar>
        <QuickTools>
          <LogoIcon />
          <SaveIcon />
          <SaveAllIcon />
          <OpenFolderIcon />
          <OpenFolderIcon doc />
          <UndoIcon />
          <UndoIcon flip />
        </QuickTools>
        <AppTitle>2层四轴飞行器.PrjPcb - Altium Designer (19.0.10)</AppTitle>
        <TitleRight>
          <SearchField $height={27}>
            <SearchGlyph size={17} />
            <input aria-label="Search" placeholder="Search" />
          </SearchField>
          <WindowButton aria-label="minimize">
            <svg width="10" height="12" viewBox="0 0 10 12"><path d="M0 11h10" stroke="#eee" strokeWidth="2" /></svg>
          </WindowButton>
          <WindowButton aria-label="restore">
            <svg width="14" height="14" viewBox="0 0 14 14">
              <path d="M4 4V1h9v6H9M1 6h9v7H1zM1 7h9M4 2h9" fill="none" stroke="#eee" strokeWidth="1" />
            </svg>
          </WindowButton>
          <WindowButton aria-label="close"><CrossIcon size={14} weight={2} color="#eee" /></WindowButton>
        </TitleRight>
      </TitleBar>
      <MenuBar>
        {menus.map(([name, key]) => (
          <MenuButton key={name}>
            {name} (<u>{key}</u>)
          </MenuButton>
        ))}
        <AccountTools>
          <MdSettings size={28} />
          <MdNotifications size={28} />
          <MdAccountCircle size={34} />
          <AccountCaret>
            <Triangle w={9} h={5} />
          </AccountCaret>
        </AccountTools>
      </MenuBar>
      <Workspace>
        <ProjectsPanel />
        <Center>
          <DocTabs>
            {docTabs.map((tab) => (
              <DocTab key={tab.text} $active={tab.active}>
                <FileIcon type={tab.icon} />
                {tab.text}
              </DocTab>
            ))}
          </DocTabs>
          <CanvasRow>
            <Canvas>
              <Schematic />
              <ActiveBar>
                {toolIcons.map((icon) => (
                  <ActiveTool
                    key={icon.key}
                    aria-label={icon.key}
                    $more={icon.key !== 'filter' && icon.key !== 'part'}
                    $divided={icon.key === 'part'}
                  >
                    {icon}
                  </ActiveTool>
                ))}
              </ActiveBar>
            </Canvas>
            <VScroll>
              <Triangle dir="up" w={17} h={9} color="#808080" />
              <i />
              <Triangle w={17} h={9} color="#808080" />
            </VScroll>
          </CanvasRow>
          <HScroll>
            <Triangle dir="left" w={9} h={17} color="#808080" />
            <i />
            <Triangle dir="right" w={9} h={17} color="#808080" />
          </HScroll>
          <EditorTab>Editor</EditorTab>
        </Center>
        <ComponentsPanel />
      </Workspace>
      <StatusBar>
        <StatusLine>
          <StatusCell>
            <span>X:139.70mm Y:71.12mm</span>
            <span>Grid:2.54mm</span>
          </StatusCell>
          <StatusCell />
          <PanelsButton>Panels</PanelsButton>
        </StatusLine>
        <StatusHint>智能粘贴</StatusHint>
      </StatusBar>
      <Taskbar />
      <SmartPasteDialog />
    </Page>
  );
}

const GlobalStyle = createGlobalStyle`
  * {
    box-sizing: border-box;
  }
  body {
    margin: 0;
    background: #333;
    color: #e6e6e6;
    font-family: 'Open Sans', 'Noto Sans CJK SC', sans-serif;
    font-size: 16px;
    line-height: 24px;
  }
  button, input, select {
    font: inherit;
    color: inherit;
  }
  button {
    padding: 0;
    border: 0;
    background: none;
  }
  svg {
    display: block;
    flex: none;
  }
  h2, p, dl, dd, ul, fieldset {
    margin: 0;
    padding: 0;
  }
`;

const raised = css`
  border: 2px solid #262626;
  border-radius: 6px;
  background: linear-gradient(#646464, #4e4e4e);
`;

const Page = styled.div`
  position: relative;
  display: flex;
  flex-direction: column;
  height: 100vh;
  min-height: 1200px;
  overflow: hidden;
`;

const TitleBar = styled.header`
  display: grid;
  grid-template-columns: 1fr auto 1fr;
  flex: none;
  height: 34px;
  background: #464646;
  border-bottom: 1px solid #2e2e2e;
`;

const QuickTools = styled.div`
  display: flex;
  align-items: center;
  gap: 4px;
  padding-left: 5px;
`;

const AppTitle = styled.div`
  padding: 5px 240px 0 0;
  font-size: 18px;
`;

const TitleRight = styled.div`
  display: flex;
  justify-content: flex-end;

  > label {
    width: 300px;
    margin-right: 13px;
  }
`;

const WindowButton = styled.button`
  display: grid;
  place-items: center;
  width: 55px;
  height: 32px;
`;

const SearchField = styled.label`
  display: flex;
  align-items: center;
  flex: none;
  gap: ${({ $tight }) => ($tight ? 9 : 14)}px;
  height: ${({ $height }) => $height}px;
  padding: 0 8px 0 ${({ $tight }) => ($tight ? 11 : 14)}px;
  border: 2px solid #242424;
  border-radius: 6px;
  background: #2c2c2c;

  input {
    flex: 1;
    min-width: 0;
    padding: 0;
    border: 0;
    outline: 0;
    background: none;
  }
  input::placeholder {
    color: #dcdcdc;
    opacity: 1;
  }
`;

const MenuBar = styled.nav`
  display: flex;
  align-items: center;
  flex: none;
  gap: 16px;
  height: 42px;
  padding: 0 10px;
  background: #404040;
`;

const MenuButton = styled.button`
  font-size: 18px;
  padding-right: 2px;
`;

const AccountTools = styled.div`
  display: flex;
  align-items: center;
  gap: 11px;
  margin-left: auto;
  color: #fff;
`;

const AccountCaret = styled.span`
  padding-left: 6px;
`;

const Workspace = styled.main`
  display: flex;
  flex: 1;
  gap: 5px;
  min-height: 0;
  padding: 6px 6px 0;
`;

const SideColumn = styled.aside`
  display: flex;
  flex-direction: column;
  flex: none;
  width: 274px;
  padding-bottom: 7px;
`;

const Panel = styled.section`
  display: flex;
  flex-direction: column;
  flex: 1;
  min-height: 0;
  background: #404040;
`;

const PanelHeader = styled.header`
  display: flex;
  align-items: center;
  flex: none;
  gap: 3px;
  height: 35px;
  padding: 0 6px 0 7px;
  background: #4c4c4c;

  strong {
    flex: 1;
  }
`;

const IconButton = styled.button`
  display: grid;
  place-items: center;
  width: 22px;
  height: 28px;
`;

const ProjectTools = styled.div`
  display: flex;
  align-items: center;
  height: 64px;
  padding: 8px 0 0 12px;
`;

const ToolSlot = styled.button`
  display: grid;
  place-items: center;
  flex: none;
  width: ${({ $divided }) => ($divided ? 57 : 50)}px;
  height: 44px;
  ${({ $divided }) => $divided && 'background: linear-gradient(#2a2a2a, #2a2a2a) 2px 50% / 1px 32px no-repeat;'}
`;

const TreeBox = styled.div`
  flex: 1;
  margin: 0 13px 14px;
  padding: 6px 7px 0 9px;
  border: 1px solid #262626;
  background: #3a3a3a;
`;

const TreeRule = styled.div`
  height: 10px;
  margin-bottom: 14px;
  border-bottom: 1px solid #262626;
`;

const Tree = styled.ul`
  list-style: none;
`;

const TreeRow = styled.li`
  display: flex;
  height: 32px;
  padding-left: ${({ $level }) => Math.max($level - 1, 0) * 18}px;
  margin-left: ${({ $level }) => ($level === 0 ? -18 : 0)}px;
`;

const TreeArrow = styled.span`
  width: 15px;
  padding-top: 15px;
`;

const TreeIcon = styled.span`
  display: grid;
  place-items: center;
  width: 34px;
`;

const TreeLabel = styled.span`
  flex: 1;
  min-width: 0;
  padding: 1px 54px 0 1px;
  border-bottom: 1px solid #303030;
  font-weight: ${({ $bold }) => ($bold ? 700 : 400)};
  ${({ $plain }) => $plain && 'border-color: transparent;'}
  ${({ $active }) => $active && 'background: #505050; color: #fff;'}
  ${({ $selected }) =>
    $selected &&
    `
      padding: 0 53px 0 0;
      border: 1px solid #7f9cb6;
      outline: 1px solid #2d4257;
      outline-offset: -2px;
      background: #6485a4;
      color: #fff;
    `}

  span {
    display: block;
    overflow: hidden;
    white-space: nowrap;
  }
`;

const BottomTabs = styled.div`
  display: flex;
  flex: none;
  height: 33px;
  overflow: hidden;
`;

const BottomTab = styled.button`
  flex: none;
  padding: 0 9px;
  border: 2px solid #242424;
  border-top-width: ${({ $active }) => ($active ? 0 : 2)}px;
  border-radius: 0 0 6px 6px;
  background: ${({ $active }) => ($active ? '#404040' : '#343434')};
`;

const TabArrows = styled.div`
  display: flex;
  align-items: center;
  flex: none;
  width: 64px;
  margin: 1px 3px 1px 0;
  ${raised}

  button {
    display: grid;
    place-items: center;
    flex: 1;
    height: 20px;
  }
  button + button {
    border-left: 2px solid #262626;
  }
`;

const Center = styled.div`
  display: flex;
  flex-direction: column;
  align-items: stretch;
  flex: 1;
  min-width: 0;
`;

const DocTabs = styled.div`
  display: flex;
  flex: none;
  height: 37px;
`;

const DocTab = styled.button`
  display: flex;
  align-items: center;
  gap: 8px;
  padding: 0 7px;
  font-size: 17px;
  ${({ $active }) =>
    $active &&
    `
      border: 1px solid #6a6a6a;
      border-bottom: 0;
      border-radius: 3px 3px 0 0;
      background: #555;
      color: #fff;
    `}
`;

const CanvasRow = styled.div`
  display: flex;
  flex: 1;
  min-height: 0;
`;

const Canvas = styled.div`
  position: relative;
  flex: 1;
  min-width: 0;
  overflow: hidden;
  background: #c0c0c0;
`;

const Sheet = styled.svg`
  width: 100%;
  height: 100%;
  font-family: 'Liberation Serif', 'Noto Sans CJK SC', serif;
  font-size: 22px;
`;

const ActiveBar = styled.div`
  position: absolute;
  top: 3px;
  left: 463px;
  display: flex;
  padding: 0 6px 0 5px;
  border-radius: 5px;
  background: #404040;
`;

const ActiveTool = styled.button`
  position: relative;
  display: grid;
  place-items: center;
  width: 50px;
  height: 49px;

  ${({ $divided }) =>
    $divided &&
    `
      width: 54px;
      background: linear-gradient(#262626, #262626) 3px 50% / 1px 32px no-repeat;
    `}

  ${({ $more }) =>
    $more &&
    `
      &::after {
        content: '';
        position: absolute;
        right: 5px;
        bottom: 2px;
        border: 4px solid transparent;
        border-right-color: #ccc;
        border-bottom-color: #ccc;
      }
    `}
`;

const VScroll = styled.div`
  display: flex;
  flex-direction: column;
  align-items: center;
  flex: none;
  width: 32px;
  padding: 12px 0;
  background: #3a3a3a;

  i {
    width: 16px;
    height: 51%;
    margin: auto 0 36px;
    border-radius: 8px;
    background: #808080;
  }
`;

const HScroll = styled.div`
  display: flex;
  align-items: center;
  justify-content: space-between;
  flex: none;
  height: 32px;
  padding: 0 44px 0 12px;
  background: #3a3a3a;

  i {
    width: 728px;
    height: 15px;
    margin-right: 346px;
    margin-left: auto;
    border-radius: 8px;
    background: #808080;
  }
`;

const EditorTab = styled.button`
  align-self: flex-start;
  flex: none;
  width: 71px;
  height: 30px;
  margin-bottom: 6px;
  border: 2px solid #282828;
  border-bottom: 0;
  background: #4f4f4f;
  color: #fff;
  font-weight: 700;
`;

const PartFilters = styled.div`
  display: flex;
  gap: 6px;
  padding: 11px 9px 9px;
`;

const FilterButton = styled.button`
  display: grid;
  place-items: center;
  width: 42px;
  height: 38px;
  ${raised}
  ${({ $dim }) => $dim && 'background: #444; border-color: #353535;'}
`;

const LibrarySelect = styled.div`
  display: flex;
  align-items: center;
  flex: 1;
  min-width: 0;
  padding: 0 8px 0 12px;
  font-size: 17px;
  ${raised}

  select {
    flex: 1;
    min-width: 0;
    margin-right: 12px;
    padding: 0;
    border: 0;
    outline: 0;
    appearance: none;
    background: none;
    overflow: hidden;
    text-overflow: clip;
  }
`;

const PartSearch = styled.div`
  padding: 0 9px 9px;
`;

const PartBox = styled.div`
  display: flex;
  flex-direction: column;
  flex: 1;
  min-height: 0;
  margin: 0 9px;
  border: 2px solid #262626;
  border-right: 0;
  background: #3a3a3a;
  overflow: hidden;
`;

const PartTable = styled.table`
  width: 100%;
  table-layout: fixed;
  border-collapse: collapse;

  th {
    height: 30px;
    padding: 0 0 0 13px;
    border-bottom: 2px solid #2c2c2c;
    background: #484848;
    font-weight: 400;
    text-align: left;
  }
  th:last-child {
    width: 76px;
    background: linear-gradient(#222, #222) 0 50% / 2px 18px no-repeat #484848;
  }
  td {
    height: 27px;
    padding: 0;
  }
  td:last-child {
    padding-left: 11px;
  }
`;

const PartRow = styled.tr`
  background: ${({ $selected }) => ($selected ? '#4f6274' : 'none')};
`;

const PartName = styled.span`
  display: flex;
  align-items: center;
  gap: 11px;
  padding-left: 4px;
  white-space: nowrap;
`;

const PartScroll = styled.div`
  display: flex;
  align-items: center;
  gap: 9px;
  height: 21px;
  margin-top: auto;
  padding-left: 9px;
  background: #404040;

  i {
    width: 136px;
    height: 9px;
    border-radius: 5px;
    background: #808080;
  }
`;

const Results = styled.div`
  margin: 1px 9px 9px;
  padding: 5px 13px;
  border: 1px solid #262626;
  background: #484848;
  color: #8c8c8c;
`;

const DetailCard = styled.div`
  flex: none;
  margin: 0 9px 12px;
  border: 2px solid #262626;
  border-radius: 5px;
  background: #3a3a3a;
`;

const DetailHead = styled.div`
  display: flex;
  align-items: center;
  justify-content: space-between;
  height: 35px;
  padding: 0 24px 0 15px;
  border-bottom: 1px solid #262626;
  background: #484848;
`;

const DetailBody = styled.div`
  margin: 8px 12px;
  padding: 7px 12px;
  border-radius: 4px;
  background: #484848;

  dl > div {
    display: flex;
    line-height: 30px;
  }
  dt {
    width: 114px;
  }
`;

const ShowMore = styled.a`
  display: flex;
  align-items: center;
  gap: 5px;
  margin-top: 14px;
  color: #a3c3ea;
  text-decoration: none;

  span {
    border-bottom: 1px dashed #a3c3ea;
  }
`;

const Models = styled.div`
  display: flex;
  align-items: center;
  gap: 7px;
  height: 34px;
  padding-left: 12px;
  color: #fff;
  font-weight: 700;
`;

const StatusBar = styled.footer`
  flex: none;
  height: 66px;
  background: #404040;
`;

const StatusLine = styled.div`
  display: flex;
  align-items: center;
  height: 34px;
  padding-right: 5px;
`;

const StatusCell = styled.div`
  display: flex;
  gap: 20px;
  width: 25.5%;
  height: 28px;
  padding: 1px 0 0 8px;
  border-right: 2px solid #353535;
`;

const PanelsButton = styled.button`
  width: 90px;
  height: 27px;
  margin-left: auto;
  line-height: 20px;
  ${raised}
`;

const StatusHint = styled.div`
  padding: 4px 8px;
  font-size: 17px;
`;

/* dialog */

const DialogLayer = styled.div`
  position: absolute;
  inset: 0;
  display: flex;
  align-items: flex-start;
  justify-content: center;
  padding-top: 214px;
`;

const Dialog = styled.section`
  width: 1212px;
  max-width: 100%;
  padding: 0 10px 11px;
  border: 1px solid #1c1c1c;
  background: #4c4c4c;
`;

const DialogTitle = styled.header`
  display: grid;
  grid-template-columns: 1fr auto 1fr;
  height: 44px;

  h2 {
    grid-column: 2;
    padding-top: 9px;
    padding-right: 66px;
    font-size: 18px;
    font-weight: 400;
  }
`;

const CloseButton = styled.button`
  display: grid;
  place-items: center;
  justify-self: end;
  width: 54px;
  height: 33px;
  background: #a00000;
`;

const DialogBody = styled.div`
  height: 833px;
  padding: 11px;
  border: 1px solid #2e2e2e;
  background: #404040;
`;

const Columns = styled.div`
  display: grid;
  grid-template-columns: 398fr 434fr 314fr;
  column-gap: 10px;
  height: 624px;
`;

const Section = styled.section`
  min-width: 0;
`;

const SectionTitle = styled.h2`
  height: 33px;
  padding-left: 9px;
  background: #4e4e4e;
  color: #fff;
  font-size: 18px;
  font-weight: 700;
  line-height: 33px;
`;

const SectionContent = styled.div`
  display: flex;
  flex-direction: column;
  gap: 14px;
  padding: 15px 12px 0;
`;

const GridFrame = styled.div`
  display: flex;
  align-items: flex-start;
  height: ${({ $height }) => $height}px;
  border: 1px solid #222;
  background: #3a3a3a;
`;

const headRow = css`
  height: 28px;
  padding: 0 2px;
  border-bottom: 1px solid #222;
  background: #484848;
  font-size: 17px;
  font-weight: 400;
  text-align: left;
`;

const GridTable = styled.table`
  width: 100%;
  table-layout: fixed;
  border-collapse: collapse;

  th {
    ${headRow}
  }
  th:first-child {
    width: 30px;
  }
  th + th {
    background: linear-gradient(#262626, #262626) 0 50% / 1px 20px no-repeat #484848;
    padding-left: 3px;
  }
  th:last-child {
    width: ${({ $count }) => $count}px;
  }
  td {
    height: 32px;
    padding: 0 2px;
    line-height: 24px;
    vertical-align: top;
  }
  td:first-child {
    padding: 0;
    background: #3a3a3a;
  }
  td:last-child {
    padding-left: 4px;
  }
`;

const GridRow = styled.tr`
  background: ${({ $selected }) => ($selected ? '#6485a4' : 'none')};
  color: ${({ $selected }) => ($selected ? '#fff' : 'inherit')};
`;

const HeadCell = styled.span`
  display: flex;
  align-items: center;
  justify-content: space-between;
  padding-right: 8px;
`;

const Tick = styled.input`
  display: grid;
  place-items: center;
  flex: none;
  appearance: none;
  width: ${({ $small }) => ($small ? 30 : 32)}px;
  height: 32px;
  margin: 0;
  border: 2px solid #262626;
  border-radius: 6px;
  background: #545454;

  &:checked::after {
    content: '';
    width: 7px;
    height: 14px;
    margin-bottom: 4px;
    border: solid #fff;
    border-width: 0 2px 2px 0;
    transform: rotate(42deg);
  }
  &:disabled {
    border-color: #3a3a3a;
    background: #444;
  }
`;

const PasteTable = styled.table`
  flex: 1;
  border-collapse: collapse;

  th {
    ${headRow}
  }
  td {
    height: 26px;
    padding: 0 2px;
  }
`;

const PasteRow = styled.tr`
  background: ${({ $selected }) => ($selected ? '#525252' : 'none')};
`;

const ListScroll = styled.div`
  display: flex;
  flex-direction: column;
  align-items: center;
  justify-content: space-between;
  align-self: stretch;
  width: 28px;
  padding: 11px 0;

  i {
    width: 12px;
    height: 193px;
    margin-bottom: 70px;
    border-radius: 6px;
    background: #808080;
  }
`;

const ArrayForm = styled.form`
  padding: 15px 12px 0;

  fieldset {
    display: grid;
    gap: 16px;
    padding-left: 24px;
    border: 0;
    margin-bottom: 28px;
  }
  legend {
    height: 36px;
    margin-left: -24px;
    padding: 0;
    font-size: 18px;
    font-weight: 700;
    line-height: 22px;
  }
  > label {
    margin-bottom: 16px;
  }
`;

const CheckLine = styled.label`
  display: flex;
  align-items: center;
  gap: 6px;
  font-size: 17px;
  color: ${({ $disabled }) => ($disabled ? '#909090' : 'inherit')};
`;

const Field = styled.div`
  display: flex;
  align-items: center;
  justify-content: space-between;
  height: 32px;
  font-size: 17px;
  color: ${({ $disabled }) => ($disabled ? '#808080' : 'inherit')};

  label {
    padding-top: 2px;
  }
`;

const TextInput = styled.input`
  width: 170px;
  height: 32px;
  padding: 0 7px 2px;
  border: 2px solid #242424;
  border-radius: 6px;
  outline: 0;
  background: #2c2c2c;
  font-size: 16px;

  &:disabled {
    border-color: #393939;
    background: #434343;
    color: #808080;
  }
`;

const DirectionSelect = styled.div`
  display: flex;
  align-items: center;
  width: 170px;
  height: 32px;
  padding: 0 6px 2px 7px;
  font-size: 16px;
  ${raised}

  select {
    flex: 1;
    padding: 0;
    border: 0;
    outline: 0;
    appearance: none;
    background: none;
  }
`;

const Summary = styled.p`
  padding: 11px 12px;
`;

const DialogActions = styled.footer`
  display: flex;
  justify-content: flex-end;
  gap: 12px;
  padding-top: 11px;
`;

const DialogButton = styled.button`
  width: 112px;
  height: 38px;
  font-size: 18px;
  ${raised}
  ${({ $primary }) => $primary && 'border-color: #9dbcdc;'}
`;

/* taskbar */

const TaskbarRoot = styled.footer`
  position: relative;
  display: grid;
  grid-template-columns: 1fr auto 1fr;
  flex: none;
  height: 72px;
  border-top: 2px solid #b2b1a6;
  background: linear-gradient(
    90deg,
    #e8dbcd,
    #e2ddc8 8%,
    #e0e6b8 17%,
    #d4e1da 26%,
    #dbe3cb 35%,
    #dfe5c0 41%,
    #f7ee9a 46%,
    #f8f1a2 52%,
    #eeeaae 64%,
    #f1e5b5 75%,
    #cfe3d6 81%,
    #cde5d6
  );
  color: #222;
`;

const Weather = styled.div`
  display: flex;
  gap: 14px;
  padding: 7px 0 0 32px;
  font-size: 17px;

  small {
    display: block;
    color: #555;
    font-size: 18px;
  }
`;

const TaskCenter = styled.div`
  display: flex;
  align-items: center;
`;

const TaskButton = styled.button`
  position: relative;
  display: grid;
  place-items: center;
  width: 66px;
  height: 70px;
  padding-bottom: 2px;

  ${({ $active }) =>
    $active && 'background: linear-gradient(#f7f3da, #f7f3da) 50% 5px / 56px 57px no-repeat;'}

  &::after {
    content: '';
    position: absolute;
    bottom: 8px;
    width: ${({ $active }) => ($active ? 24 : 9)}px;
    height: ${({ $running, $active }) => ($running || $active ? 5 : 0)}px;
    border-radius: 3px;
    background: ${({ $active }) => ($active ? '#0d78d4' : '#8a8768')};
  }
`;

const TaskSearch = styled.label`
  display: flex;
  align-items: center;
  gap: 16px;
  width: 326px;
  height: 46px;
  margin: 0 6px 2px 7px;
  padding: 0 8px 0 16px;
  border-bottom: 2px solid #bfc3b0;
  border-radius: 23px;
  background: #f6f7ef;
  font-size: 21px;

  input {
    flex: 1;
    min-width: 0;
    padding: 0;
    border: 0;
    outline: 0;
    background: none;
  }
  input::placeholder {
    color: #555;
    opacity: 1;
  }
`;

const Tray = styled.div`
  display: flex;
  align-items: center;
  justify-content: flex-end;
  padding: 0 32px 2px 0;
`;

const TrayGroup = styled.div`
  display: flex;
  margin-right: 7px;
`;

const TrayItem = styled.button`
  display: grid;
  place-items: center;
  width: ${({ $narrow }) => ($narrow ? 36 : 48)}px;
  height: 48px;
  font-size: 21px;
`;

const Clock = styled.div`
  display: flex;
  flex-direction: column;
  padding: 0 13px 0 18px;
  font-size: 17px;
  text-align: right;
`;

const Watermark = styled.span`
  position: absolute;
  right: 14px;
  bottom: 4px;
  color: #9aa59e;
  font-size: 11px;
  line-height: 14px;
`;

export default App;
